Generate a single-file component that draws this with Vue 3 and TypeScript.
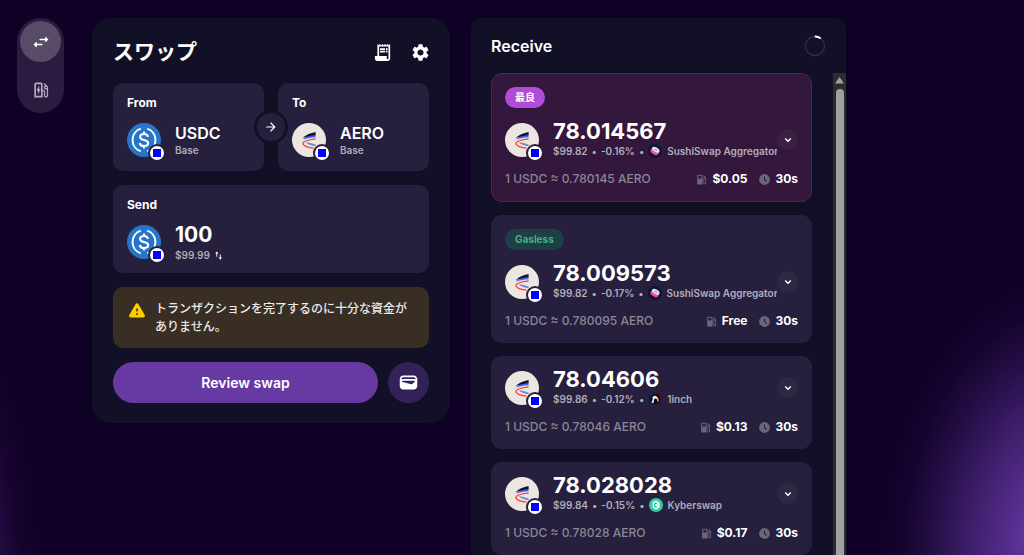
<script setup lang="ts">
import { ref } from 'vue'

type Provider = 'sushi' | 'oneinch' | 'kyber'

interface Quote {
  badge?: string
  best?: boolean
  amount: string
  fiat: string
  impact: string
  provider: Provider
  providerName: string
  rate: string
  gas: string
  time: string
}

const sendAmount = ref('100')

const tokens = [
  { label: 'From', symbol: 'USDC', chain: 'Base' },
  { label: 'To', symbol: 'AERO', chain: 'Base' },
]

const quotes: Quote[] = [
  { badge: '最良', best: true, amount: '78.014567', fiat: '$99.82', impact: '-0.16%', provider: 'sushi', providerName: 'SushiSwap Aggregator', rate: '1 USDC ≈ 0.780145 AERO', gas: '$0.05', time: '30s' },
  { badge: 'Gasless', amount: '78.009573', fiat: '$99.82', impact: '-0.17%', provider: 'sushi', providerName: 'SushiSwap Aggregator', rate: '1 USDC ≈ 0.780095 AERO', gas: 'Free', time: '30s' },
  { amount: '78.04606', fiat: '$99.86', impact: '-0.12%', provider: 'oneinch', providerName: '1inch', rate: '1 USDC ≈ 0.78046 AERO', gas: '$0.13', time: '30s' },
  { amount: '78.028028', fiat: '$99.84', impact: '-0.15%', provider: 'kyber', providerName: 'Kyberswap', rate: '1 USDC ≈ 0.78028 AERO', gas: '$0.17', time: '30s' },
]
</script>

<template>
  <svg class="defs" aria-hidden="true">
    <symbol id="usdc" viewBox="0 0 34 34">
      <circle cx="17" cy="17" r="17" fill="#2775ca" />
      <g fill="none" stroke="#fff" stroke-width="2" stroke-linecap="butt">
        <path d="M13.8 5.6a12 12 0 0 0 0 22.8M20.2 5.6a12 12 0 0 1 0 22.8" />
        <path stroke-width="2.1" d="M21 13.9c-.3-1.9-1.8-2.9-4-2.9-2.300 0-3.900 1.100-3.900 2.900 0 4.300 8.100 1.700 8.100 6.200 0 1.900-1.700 3-4.200 3s-4-1.100-4.300-3.100M17 8.600V11M17 23v2.500" />
      </g>
    </symbol>
    <symbol id="aero" viewBox="0 0 34 34">
      <circle cx="17" cy="17" r="17" fill="#ebe7e0" />
      <path fill="#3c63ff" d="M10.600 16.600c2.400-2.600 7-3.600 13-5v2.600c-4.500.3-8.500.8-13 2.400z" />
      <path fill="#10152f" d="M10.600 15c3-3.100 7.500-4.400 13-5.900v2.800c-5 1.100-9.500 1.600-13 3.100z" />
      <path fill="#7088d8" d="M13.500 19.300c3 .3 7 1 10.100 2.300v1.600c-3.600-.6-7.700-1.500-10.100-3.900z" />
      <path fill="none" stroke="#ff3b2f" stroke-width="1.300" d="M23.600 15.900c-6.500.8-12.700 2.600-12.700 4.700s5.600 4.200 10.700 4.600" />
    </symbol>
    <symbol id="gas" viewBox="0 0 24 24">
      <path fill="currentColor" d="m19.770 7.230.01-.01-3.720-3.720L15 4.560l2.110 2.110c-.94.36-1.610 1.260-1.610 2.330 0 1.380 1.120 2.500 2.500 2.500.36 0 .69-.08 1-.21v7.210c0 .55-.45 1-1 1s-1-.45-1-1V14c0-1.100-.9-2-2-2h-1V5c0-1.100-.9-2-2-2H6c-1.100 0-2 .9-2 2v16h10v-7.500h1.500v5c0 1.380 1.120 2.500 2.500 2.500s2.500-1.120 2.500-2.500V9c0-.69-.28-1.320-.73-1.770zM12 10H6V5h6v5zm6 0c-.55 0-1-.45-1-1s.45-1 1-1 1 .45 1 1-.45 1-1 1z" />
    </symbol>
    <symbol id="clock" viewBox="0 0 24 24">
      <path fill="currentColor" fill-rule="evenodd" d="M12 2a10 10 0 1 0 0 20 10 10 0 0 0 0-20zm-1 4.500h2v5.300l3.600 3.600-1.400 1.400-4.200-4.200z" />
    </symbol>
    <symbol id="chevron" viewBox="0 0 24 24">
      <path fill="currentColor" d="M16.590 8.090 12 12.670 7.410 8.090 5.500 10l6.500 6.500 6.500-6.500z" />
    </symbol>
    <symbol id="sushi" viewBox="0 0 14 14">
      <circle cx="7" cy="7" r="7" fill="#0f1630" />
      <g transform="rotate(32 7 7)">
        <rect x="2.700" y="4.600" width="8.600" height="5.800" rx="2.900" fill="#f24fa6" />
        <ellipse cx="7" cy="5.500" rx="4.100" ry="2.200" fill="#d8ecf7" />
        <ellipse cx="7" cy="5.500" rx="1.700" ry=".9" fill="#ee6fb4" />
      </g>
    </symbol>
    <symbol id="oneinch" viewBox="0 0 14 14">
      <path fill="#0d2450" d="M7 0a7 7 0 0 0 0 14z" />
      <path fill="#3f1024" d="M7 0a7 7 0 0 1 0 14z" />
      <circle cx="7" cy="7" r="5" fill="#090a14" />
      <path fill="#e9e9ef" d="m3.500 11 1.400-4.700-.9-.6 2-1.900 2 .2 1.900 1.600.8 3.200-1 1.300-.5-2.600-1.400-1-1.500.6L5.500 11z" />
      <path fill="#d3312f" d="m8.600 4.300 1.900 1.600.5 2.300-1-1z" />
    </symbol>
    <symbol id="kyber" viewBox="0 0 14 14">
      <circle cx="7" cy="7" r="7" fill="#31cb9e" />
      <path fill="none" stroke="#fff" stroke-width="1.400" stroke-linejoin="round" d="M9.800 5 7 3.100 4.300 4.900v4.200L7 10.900 9.800 9M9.800 5 6.700 7l3.100 2z" />
    </symbol>
  </svg>

  <main class="page">
    <nav class="rail" aria-label="Mode">
      <button class="rail-item active" type="button" aria-label="Swap">
        <svg viewBox="0 0 24 24"><path fill="currentColor" d="m6.140 11.860-2.780 2.790c-.19.2-.19.51 0 .71l2.780 2.790c.31.32.85.09.85-.35V16H13c.55 0 1-.45 1-1s-.45-1-1-1H6.990v-1.790c0-.45-.54-.67-.85-.35zm14.510-3.210-2.780-2.790c-.31-.32-.85-.09-.85.35V8H11c-.55 0-1 .45-1 1s.45 1 1 1h6.010v1.790c0 .45.54.67.85.35l2.780-2.790c.2-.19.2-.51.01-.7z" /></svg>
      </button>
      <button class="rail-item" type="button" aria-label="Gas">
        <svg viewBox="0 0 24 24"><path fill="currentColor" d="m19.770 7.230.01-.01-3.720-3.720L15 4.560l2.110 2.110c-.94.36-1.610 1.260-1.610 2.330 0 1.380 1.120 2.500 2.500 2.500.36 0 .69-.08 1-.21v7.210c0 .55-.45 1-1 1s-1-.45-1-1V14c0-1.100-.9-2-2-2h-1V5c0-1.100-.9-2-2-2H6c-1.100 0-2 .9-2 2v16h10v-7.500h1.500v5c0 1.380 1.120 2.500 2.500 2.500s2.500-1.120 2.500-2.500V9c0-.69-.28-1.320-.73-1.770zM18 10c-.55 0-1-.45-1-1s.45-1 1-1 1 .45 1 1-.45 1-1 1zM12 19H6V5h6v14zm-3.800-1.500v-4.800H6.500l3.400-6.200v4.500h1.700z" /></svg>
      </button>
    </nav>

    <section class="swap">
      <header class="swap-head">
        <h1>スワップ</h1>
        <div class="tools">
          <button type="button" aria-label="History">
            <svg viewBox="2 2 20 20"><path fill="currentColor" d="M19.500 3.500 18 2l-1.500 1.500L15 2l-1.500 1.500L12 2l-1.500 1.500L9 2 7.500 3.500 6 2v14H3v3c0 1.660 1.340 3 3 3h12c1.660 0 3-1.340 3-3V2l-1.500 1.500zM19 19c0 .55-.45 1-1 1s-1-.45-1-1v-3H8V5h11v14zM9 7h6v2H9zm7 0h2v2h-2zm-7 3h6v2H9zm7 0h2v2h-2z" /></svg>
          </button>
          <button type="button" aria-label="Settings">
            <svg viewBox="2 2 20 20"><path fill="currentColor" d="M19.140 12.940c.04-.3.06-.61.06-.94 0-.32-.02-.64-.07-.94l2.030-1.580c.18-.14.23-.41.12-.61l-1.920-3.320c-.12-.22-.37-.29-.59-.22l-2.390.96c-.5-.38-1.030-.7-1.620-.94l-.36-2.540c-.04-.24-.24-.41-.48-.41h-3.840c-.24 0-.43.17-.47.41l-.36 2.540c-.59.24-1.130.57-1.620.94l-2.390-.96c-.22-.08-.47 0-.59.22L2.740 8.870c-.12.21-.08.47.12.61l2.030 1.580c-.05.3-.09.63-.09.94s.02.64.07.94l-2.030 1.580c-.18.14-.23.41-.12.61l1.920 3.320c.12.22.37.29.59.22l2.390-.96c.5.38 1.030.7 1.620.94l.36 2.540c.05.24.24.41.48.41h3.840c.24 0 .44-.17.47-.41l.36-2.540c.59-.24 1.130-.56 1.620-.94l2.390.96c.22.08.47 0 .59-.22l1.920-3.320c.12-.22.07-.47-.12-.61l-2.010-1.580zM12 15.600c-1.980 0-3.600-1.620-3.600-3.600s1.620-3.600 3.600-3.600 3.600 1.620 3.600 3.600-1.620 3.600-3.600 3.600z" /></svg>
          </button>
        </div>
      </header>

      <div class="pair">
        <button v-for="t in tokens" :key="t.label" class="card" type="button">
          <span class="label">{{ t.label }}</span>
          <span class="token">
            <span class="avatar">
              <svg><use :href="t.symbol === 'USDC' ? '#usdc' : '#aero'" /></svg>
              <i class="chain"></i>
            </span>
            <span class="token-text">
              <span class="symbol">{{ t.symbol }}</span>
              <span class="sub">{{ t.chain }}</span>
            </span>
          </span>
        </button>
        <button class="flip" type="button" aria-label="Reverse">
          <svg viewBox="0 0 24 24"><path fill="currentColor" d="m12 4-1.410 1.410L16.170 11H4v2h12.170l-5.580 5.590L12 20l8-8z" /></svg>
        </button>
      </div>

      <div class="card">
        <label class="label" for="send">Send</label>
        <div class="token">
          <span class="avatar">
            <svg><use href="#usdc" /></svg>
            <i class="chain"></i>
          </span>
          <div class="token-text">
            <input id="send" v-model="sendAmount" class="send-amount" inputmode="decimal" />
            <button class="sub unit" type="button">
              $99.99
              <svg viewBox="0 0 24 24"><path fill="currentColor" d="M18 17.500V9.500h-2.500v8H12L16.800 23l4.700-5.500zM7.500 1 3 6.500h3.200V15h2.500V6.500H12z" /></svg>
            </button>
          </div>
        </div>
      </div>

      <div class="warning" role="alert">
        <svg viewBox="0 0 24 24"><path fill="currentColor" d="M4.470 21h15.060c1.540 0 2.500-1.670 1.730-3L13.730 4.990c-.77-1.330-2.690-1.330-3.460 0L2.740 18c-.77 1.330.19 3 1.730 3zM12 14c-.55 0-1-.45-1-1v-2c0-.55.45-1 1-1s1 .45 1 1v2c0 .55-.45 1-1 1zm1 4h-2v-2h2v2z" /></svg>
        <p>トランザクションを完了するのに十分な資金がありません。</p>
      </div>

      <div class="actions">
        <button class="review" type="button">Review swap</button>
        <button class="wallet" type="button" aria-label="Wallet">
          <svg viewBox="0 0 24 24"><path fill="currentColor" d="M18 4H6C3.790 4 2 5.790 2 8v8c0 2.210 1.790 4 4 4h12c2.210 0 4-1.790 4-4V8c0-2.210-1.790-4-4-4zm-1.860 9.770c-.24.2-.57.28-.88.2L4.150 11.250C4.450 10.520 5.160 10 6 10h12c.67 0 1.260.34 1.630.84l-3.490 2.930zM6 6h12c1.100 0 2 .9 2 2v.55c-.59-.34-1.270-.55-2-.55H6c-.73 0-1.410.21-2 .55V8c0-1.100.9-2 2-2z" /></svg>
        </button>
      </div>
    </section>

    <section class="receive">
      <header class="receive-head">
        <h2>Receive</h2>
        <svg class="spinner" viewBox="0 0 22 22" fill="none" stroke-width="1.500">
          <circle cx="11" cy="11" r="9.500" stroke="#2f2852" />
          <path stroke="#fff" stroke-width="1.800" stroke-linecap="round" d="M11.500 1.500a9.500 9.500 0 0 1 4.600 1.500" />
        </svg>
      </header>
      <div class="scroller">
        <ul class="quotes">
          <li v-for="q in quotes" :key="q.amount" class="quote" :class="{ best: q.best }">
            <span v-if="q.badge" class="badge">{{ q.badge }}</span>
            <div class="quote-main">
              <span class="avatar">
                <svg><use href="#aero" /></svg>
                <i class="chain"></i>
              </span>
              <div class="quote-text">
                <span class="amount">{{ q.amount }}</span>
                <span class="meta">
                  <span>{{ q.fiat }}</span><b>•</b><span>{{ q.impact }}</span><b>•</b>
                  <svg><use :href="'#' + q.provider" /></svg>
                  <span>{{ q.providerName }}</span>
                </span>
              </div>
              <button class="expand" type="button" aria-label="Details">
                <svg><use href="#chevron" /></svg>
              </button>
            </div>
            <div class="quote-foot">
              <span class="rate">{{ q.rate }}</span>
              <span class="cost"><svg><use href="#gas" /></svg>{{ q.gas }}</span>
              <span class="cost"><svg><use href="#clock" /></svg>{{ q.time }}</span>
            </div>
          </li>
        </ul>
        <div class="bar" aria-hidden="true">
          <svg viewBox="0 0 13 16"><path fill="#a0a0a0" d="M6.500 4 11 10.500H2z" /></svg>
          <div class="thumb"></div>
        </div>
      </div>
    </section>
  </main>
</template>

<style>
body {
  margin: 0;
  background: #0f0026;
}
</style>

<style scoped>
* {
  box-sizing: border-box;
}

.defs {
  position: absolute;
  width: 0;
  height: 0;
}

button,
input {
  margin: 0;
  padding: 0;
  border: 0;
  background: none;
  color: inherit;
  font: inherit;
}

button {
  cursor: pointer;
}

h1,
h2,
p,
ul {
  margin: 0;
  padding: 0;
}

svg {
  display: block;
  flex: none;
}

.page {
  display: flex;
  align-items: flex-start;
  height: 100vh;
  padding: 18px 17px 0;
  overflow: hidden;
  color: #fff;
  font-family: Inter, "Noto Sans CJK JP", sans-serif;
  background:
    radial-gradient(ellipse 200px 290px at 105% 100%, #6538a5 0%, #5b3297 28%, #3f1f6c 52%, #230e45 72%, #16042f 86%, rgba(15, 0, 38, 0) 100%),
    radial-gradient(ellipse 150px 330px at -105px 105%, #5b3297 24%, #3f1f6c 50%, #230e45 68%, #17042f 82%, rgba(15, 0, 38, 0) 100%),
    #0f0026;
}

.rail {
  display: flex;
  flex: none;
  flex-direction: column;
  gap: 7px;
  margin-right: 28px;
  padding: 3px;
  border-radius: 24px;
  background: #2b1b40;
}

.rail-item {
  display: grid;
  place-items: center;
  width: 41px;
  height: 41px;
  border-radius: 50%;
  color: #b3abbd;
}

.rail-item.active {
  background: #574b67;
  color: #fff;
}

.rail-item svg {
  width: 20px;
  height: 20px;
}

.swap {
  display: flex;
  flex: 0 1 358px;
  flex-direction: column;
  gap: 14px;
  margin-right: 21px;
  padding: 20px 21px;
  border-radius: 20px;
  background: #121027;
}

.swap-head {
  display: flex;
  align-items: center;
  justify-content: space-between;
  height: 28px;
  margin-bottom: 3px;
}

h1 {
  font-size: 21px;
  line-height: 28px;
  font-weight: 700;
}

.tools {
  display: flex;
  gap: 21px;
}

.tools svg {
  width: 17px;
  height: 17px;
}

.pair {
  position: relative;
  display: grid;
  grid-template-columns: 1fr 1fr;
  gap: 14px;
}

.card {
  display: flex;
  flex-direction: column;
  gap: 14px;
  padding: 14px;
  border-radius: 10px;
  background: #26203e;
  text-align: left;
}

.label {
  font-size: 12px;
  line-height: 12px;
  font-weight: 700;
}

.token {
  display: flex;
  align-items: center;
  gap: 14px;
  height: 34px;
}

.avatar {
  position: relative;
  flex: none;
  width: 34px;
  height: 34px;
}

.avatar svg {
  width: 34px;
  height: 34px;
}

.chain {
  position: absolute;
  right: -5px;
  bottom: -5px;
  display: grid;
  place-items: center;
  width: 18px;
  height: 18px;
  border: 2px solid #26203e;
  border-radius: 50%;
  background: #fff;
}

.chain::after {
  content: "";
  width: 8px;
  height: 8px;
  background: #00f;
}

.token-text {
  display: flex;
  flex: 1;
  flex-direction: column;
  min-width: 0;
}

.symbol {
  font-size: 16px;
  line-height: 20px;
  font-weight: 600;
}

.sub {
  color: #aeabb9;
  font-size: 10px;
  line-height: 14px;
  font-weight: 600;
}

.unit {
  display: flex;
  align-items: center;
  gap: 4px;
}

.unit svg {
  width: 9px;
  height: 9px;
  color: #fff;
}

.send-amount {
  width: 100%;
  height: 26px;
  font-size: 21px;
  line-height: 26px;
  font-weight: 700;
}

.amount {
  font-size: 22px;
  line-height: 26px;
  font-weight: 700;
}

.flip {
  position: absolute;
  top: 50%;
  left: 50%;
  display: grid;
  place-items: center;
  width: 34px;
  height: 34px;
  border: 3px solid #121027;
  border-radius: 50%;
  background: #26203e;
  transform: translate(-50%, -50%);
}

.flip svg {
  width: 14px;
  height: 14px;
}

.warning {
  display: flex;
  gap: 8px;
  padding: 13px 14px 12px;
  border-radius: 10px;
  background: #382e23;
}

.warning svg {
  width: 20px;
  height: 20px;
  color: #fc0;
}

.warning p {
  color: #eceaec;
  font-size: 12px;
  line-height: 18px;
  font-weight: 500;
}

.actions {
  display: flex;
  gap: 10px;
}

.review {
  flex: 1;
  height: 41px;
  border-radius: 21px;
  background: #673aa3;
  font-size: 14px;
  font-weight: 600;
}

.wallet {
  display: grid;
  place-items: center;
  width: 41px;
  height: 41px;
  border-radius: 50%;
  background: #342159;
}

.wallet svg {
  width: 21px;
  height: 21px;
}

.receive {
  display: flex;
  flex: 0 1 375px;
  flex-direction: column;
  align-self: stretch;
  min-width: 0;
  border-radius: 10px 10px 0 0;
  background: #121027;
}

.receive-head {
  display: flex;
  flex: none;
  align-items: center;
  justify-content: space-between;
  height: 55px;
  padding: 0 20px;
}

h2 {
  font-size: 16px;
  line-height: 20px;
  font-weight: 600;
}

.spinner {
  width: 22px;
  height: 22px;
}

.scroller {
  display: flex;
  flex: 1;
  gap: 21px;
  min-height: 0;
  padding-left: 20px;
}

.quotes {
  display: flex;
  flex: 1;
  flex-direction: column;
  gap: 13px;
  min-width: 0;
  overflow-y: auto;
  list-style: none;
  scrollbar-width: none;
}

.quote {
  display: flex;
  flex: none;
  flex-direction: column;
  align-items: stretch;
  gap: 14px;
  padding: 14px;
  border-radius: 11px;
  background: #26203e;
}

.quote.best {
  padding: 13px 13px 14px;
  border: 1px solid #562164;
  background: #33173c;
}

.best .chain {
  border-color: #33173c;
}

.badge {
  align-self: flex-start;
  padding: 0 10px;
  border-radius: 11px;
  background: #1f3f46;
  color: #3fb47f;
  font-size: 10px;
  line-height: 21px;
  font-weight: 700;
}

.best .badge {
  background: #af4dda;
  color: #fff;
}

.quote-main {
  display: flex;
  align-items: center;
  height: 35px;
}

.quote-text {
  display: flex;
  flex: 1;
  flex-direction: column;
  min-width: 0;
  margin-left: 14px;
  padding-bottom: 3px;
  overflow: hidden;
}

.meta {
  display: flex;
  align-items: center;
  height: 14px;
  color: #b1aebc;
  font-size: 10px;
  line-height: 14px;
  font-weight: 600;
  white-space: nowrap;
}

.meta b {
  margin: 0 4px;
  font-weight: 500;
}

.meta svg {
  width: 14px;
  height: 14px;
  margin-right: 5px;
}

.expand {
  display: grid;
  flex: none;
  place-items: center;
  width: 21px;
  height: 21px;
  border-radius: 50%;
  background: rgba(255, 255, 255, 0.04);
}

.expand svg {
  width: 12px;
  height: 12px;
}

.quote-foot {
  display: flex;
  align-items: center;
  height: 16px;
  gap: 11px;
  font-size: 12px;
  line-height: 16px;
}

.rate {
  flex: 1;
  color: #8b8797;
  font-weight: 500;
  white-space: nowrap;
}

.cost {
  display: flex;
  align-items: center;
  gap: 4px;
  font-weight: 700;
}

.cost svg {
  width: 13px;
  height: 13px;
  color: #6b6679;
}

.bar {
  display: flex;
  flex: none;
  flex-direction: column;
  align-items: center;
  width: 13px;
  background: #2c2c2c;
}

.bar svg {
  width: 13px;
  height: 16px;
}

.thumb {
  flex: 1;
  width: 8px;
  border-radius: 4px 4px 0 0;
  background: #a0a0a0;
}
</style>
